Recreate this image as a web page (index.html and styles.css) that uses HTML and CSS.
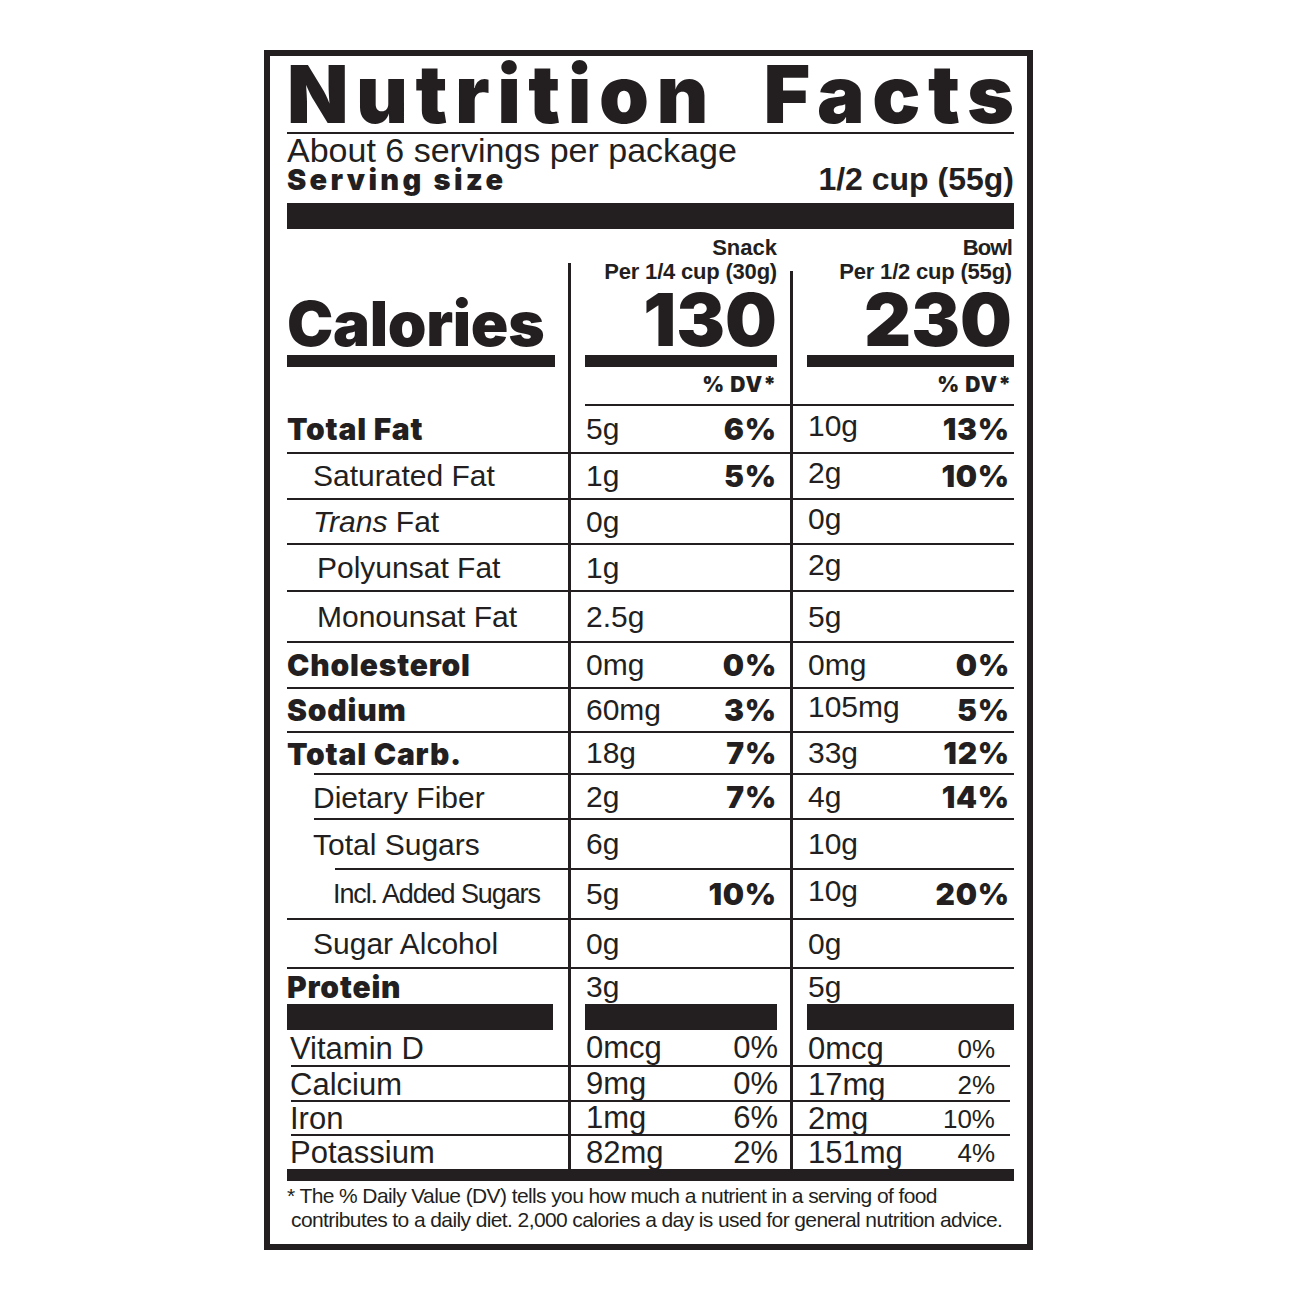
FILE: index.html
```html
<!DOCTYPE html>
<html lang="en">
<head>
<meta charset="utf-8">
<title>Nutrition Facts</title>
<link rel="stylesheet" href="styles.css">
</head>
<body>
<div class="label">
  <div class="title"><span>Nutrition</span><span class="last">Facts</span></div>
  <div class="servings">About 6 servings per package</div>
  <div class="size"><span class="size-k">Serving size</span><span class="size-v">1/2 cup (55g)</span></div>
  <div class="bar-thick"></div>

  <div class="facts">
    <div class="c-lab">
      <div class="cal-word">Calories</div>
      <div class="cal-bar lab-bar"></div>
    </div>
    <div class="hdr hdr-s">
      <div class="h-name">Snack</div>
      <div class="h-per">Per 1/4 cup (30g)</div>
      <div class="h-cal">130</div>
      <div class="cal-bar"></div>
      <div class="h-dv">% DV*</div>
    </div>
    <div class="hdr hdr-w">
      <div class="h-name h-bowl">Bowl</div>
      <div class="h-per">Per 1/2 cup (55g)</div>
      <div class="h-cal">230</div>
      <div class="cal-bar"></div>
      <div class="h-dv">% DV*</div>
    </div>

    <div class="cell lab bold">Total Fat</div>
    <div class="cell val s"><span>5g</span><b class="pct">6%</b></div>
    <div class="cell val w"><span class="up">10g</span><b class="pct">13%</b></div>

    <div class="cell lab i1">Saturated Fat</div>
    <div class="cell val s"><span>1g</span><b class="pct">5%</b></div>
    <div class="cell val w"><span class="up">2g</span><b class="pct">10%</b></div>

    <div class="cell lab i1"><span><i>Trans</i> Fat</span></div>
    <div class="cell val s"><span>0g</span></div>
    <div class="cell val w"><span class="up">0g</span></div>

    <div class="cell lab i2">Polyunsat Fat</div>
    <div class="cell val s"><span>1g</span></div>
    <div class="cell val w"><span class="up">2g</span></div>

    <div class="cell lab i2">Monounsat Fat</div>
    <div class="cell val s"><span>2.5g</span></div>
    <div class="cell val w"><span>5g</span></div>

    <div class="cell lab bold">Cholesterol</div>
    <div class="cell val s"><span>0mg</span><b class="pct">0%</b></div>
    <div class="cell val w"><span>0mg</span><b class="pct">0%</b></div>

    <div class="cell lab bold">Sodium</div>
    <div class="cell val s"><span>60mg</span><b class="pct">3%</b></div>
    <div class="cell val w"><span class="up">105mg</span><b class="pct">5%</b></div>

    <div class="cell lab bold ln27">Total Carb.</div>
    <div class="cell val s"><span>18g</span><b class="pct">7%</b></div>
    <div class="cell val w"><span>33g</span><b class="pct">12%</b></div>

    <div class="cell lab i1 ln27">Dietary Fiber</div>
    <div class="cell val s"><span>2g</span><b class="pct">7%</b></div>
    <div class="cell val w"><span>4g</span><b class="pct">14%</b></div>

    <div class="cell lab i1 ln48">Total Sugars</div>
    <div class="cell val s"><span>6g</span></div>
    <div class="cell val w"><span>10g</span></div>

    <div class="cell lab i3 narrow">Incl. Added Sugars</div>
    <div class="cell val s"><span>5g</span><b class="pct">10%</b></div>
    <div class="cell val w"><span class="up">10g</span><b class="pct">20%</b></div>

    <div class="cell lab i1">Sugar Alcohol</div>
    <div class="cell val s"><span>0g</span></div>
    <div class="cell val w"><span>0g</span></div>

    <div class="cell lab bold nob">Protein</div>
    <div class="cell val s nob"><span>3g</span></div>
    <div class="cell val w nob"><span>5g</span></div>

    <div class="cell lab nob"><div class="blk blk-l"></div></div>
    <div class="cell val nob"><div class="blk blk-s"></div></div>
    <div class="cell val nob"><div class="blk blk-w"></div></div>

    <div class="cell lab vit ln4">Vitamin D</div>
    <div class="cell val s vit"><span>0mcg</span><span>0%</span></div>
    <div class="cell val w vit vw"><span>0mcg</span><span class="vp">0%</span></div>

    <div class="cell lab vit ln4">Calcium</div>
    <div class="cell val s vit"><span>9mg</span><span>0%</span></div>
    <div class="cell val w vit vw"><span>17mg</span><span class="vp">2%</span></div>

    <div class="cell lab vit ln4">Iron</div>
    <div class="cell val s vit"><span>1mg</span><span>6%</span></div>
    <div class="cell val w vit vw"><span>2mg</span><span class="vp">10%</span></div>

    <div class="cell lab vit nob">Potassium</div>
    <div class="cell val s vit nob"><span>82mg</span><span>2%</span></div>
    <div class="cell val w vit nob"><span>151mg</span><span class="vp">4%</span></div>
  </div>

  <div class="bar-bottom"></div>
  <div class="foot">
    <div class="foot-1">* The % Daily Value (DV) tells you how much a nutrient in a serving of food</div>
    <div class="foot-2">contributes to a daily diet. 2,000 calories a day is used for general nutrition advice.</div>
  </div>
</div>
</body>
</html>
```
FILE: styles.css
```css
html, body {
  margin: 0;
  padding: 0;
  background: #ffffff;
}

body {
  color: #231f20;
  font-family: "Liberation Sans", Arial, sans-serif;
}

.label {
  box-sizing: border-box;
  width: 769px;
  margin: 50px 0 0 264px;
  border: 6px solid #231f20;
  padding: 0 13px 12px 17px;
  background: #ffffff;
}

.title {
  display: flex;
  justify-content: space-between;
  font-family: Inter, "DejaVu Sans", sans-serif;
  font-weight: 900;
  font-size: 80px;
  line-height: 76px;
  letter-spacing: 7.5px;
  border-bottom: 2px solid #231f20;
  white-space: nowrap;
}

.title .last {
  margin-right: -7.5px;
}

.servings {
  font-size: 34px;
  line-height: 32px;
  white-space: nowrap;
}

.size {
  display: flex;
  justify-content: space-between;
  align-items: baseline;
  line-height: 26px;
}

.size-k {
  font-family: Inter, "DejaVu Sans", sans-serif;
  font-weight: 900;
  font-size: 29px;
  letter-spacing: 3.3px;
}

.size-v {
  font-weight: 700;
  font-size: 32px;
}

.bar-thick {
  height: 26px;
  margin-top: 10px;
  background: #231f20;
}

/* ---------- main grid ---------- */
.facts {
  display: grid;
  grid-template-columns: 281px 222px 224px;
  grid-template-rows:
    177px
    48px 46px 45px 47px 51px 46px 44px 42px 45px 50px 50px 49px
    35px 26px
    37px 35px 34px 33px;
}

.c-lab {
  display: flex;
  flex-direction: column;
  padding-top: 64px;
}

.cal-word {
  font-family: Inter, "DejaVu Sans", sans-serif;
  font-weight: 900;
  font-size: 62px;
  line-height: 62px;
  letter-spacing: -0.3px;
}

.cal-bar {
  height: 12px;
  background: #231f20;
  align-self: stretch;
  margin-left: 17px;
}

.cal-bar.lab-bar {
  margin-left: 0;
  margin-right: 13px;
}

.hdr {
  display: flex;
  flex-direction: column;
  align-items: flex-end;
  box-sizing: border-box;
  padding: 8px 13px 8px 0;
}

.hdr-s {
  background:
    linear-gradient(#231f20, #231f20) 0 34px / 3px 100% no-repeat,
    linear-gradient(#231f20, #231f20) 17px 100% / calc(100% - 17px) 2px no-repeat;
}

.hdr-w {
  padding-right: 0;
  background:
    linear-gradient(#231f20, #231f20) 0 42px / 3px 100% no-repeat,
    linear-gradient(#231f20, #231f20) 0 100% / 100% 2px no-repeat;
}

.hdr-w .h-name,
.hdr-w .h-per,
.hdr-w .h-cal,
.hdr-w .h-dv {
  padding-right: 2px;
}

.h-name {
  font-weight: 700;
  font-size: 22px;
  line-height: 22px;
}

.h-bowl {
  letter-spacing: -0.8px;
}

.h-per {
  font-weight: 700;
  font-size: 22px;
  line-height: 26px;
  letter-spacing: -0.2px;
  white-space: nowrap;
}

.h-cal {
  font-family: Inter, "DejaVu Sans", sans-serif;
  font-weight: 900;
  font-size: 73px;
  line-height: 70px;
}

.h-dv {
  font-family: Inter, "DejaVu Sans", sans-serif;
  font-weight: 900;
  font-size: 21px;
  line-height: 26px;
  margin-top: 5px;
  letter-spacing: 1px;
}

/* ---------- rows ---------- */
.cell {
  display: flex;
  align-items: center;
  box-sizing: border-box;
  border-bottom: 2px solid #231f20;
  font-size: 30px;
  line-height: 34px;
  white-space: nowrap;
}

.lab.bold {
  font-family: Inter, "DejaVu Sans", sans-serif;
  font-weight: 900;
  font-size: 30px;
  letter-spacing: 0.8px;
}

.lab.i1 { padding-left: 26px; }
.lab.i2 { padding-left: 30px; }
.lab.i3 { padding-left: 46px; }

.lab.narrow {
  font-size: 27px;
  letter-spacing: -1.1px;
}

.ln27 {
  border-bottom: 0;
  background: linear-gradient(#231f20, #231f20) 27px 100% / calc(100% - 27px) 2px no-repeat;
}

.ln48 {
  border-bottom: 0;
  background: linear-gradient(#231f20, #231f20) 48px 100% / calc(100% - 48px) 2px no-repeat;
}

.ln4 {
  border-bottom: 0;
  background: linear-gradient(#231f20, #231f20) 4px 100% / calc(100% - 4px) 2px no-repeat;
}

.nob {
  border-bottom: 0;
}

.val {
  border-left: 3px solid #231f20;
  justify-content: space-between;
}

.val.s { padding: 0 13px 0 15px; }
.val.w { padding: 0 4px 0 15px; }

.pct {
  font-family: Inter, "DejaVu Sans", sans-serif;
  font-weight: 900;
  font-size: 30px;
  letter-spacing: 0.8px;
}

.up {
  margin-bottom: 6px;
}

/* black bars below protein */
.blk {
  height: 26px;
  background: #231f20;
  flex: 1;
}

.blk-l { margin-right: 15px; }
.blk-s { margin: 0 13px 0 14px; }
.blk-w { margin: 0 0 0 14px; }

/* vitamins */
.vit {
  font-size: 31px;
  line-height: 34px;
}

.lab.vit { padding-left: 3px; }

.val.s.vit { padding-right: 12px; }

.val.w.vit { padding-right: 19px; }

.vw {
  border-bottom: 0;
  background: linear-gradient(#231f20, #231f20) 0 100% / calc(100% - 4px) 2px no-repeat;
}

.vp {
  font-size: 26px;
}

/* ---------- footer ---------- */
.bar-bottom {
  height: 12px;
  background: #231f20;
}

.foot {
  margin-top: 3px;
  font-size: 21px;
  line-height: 24px;
  letter-spacing: -0.6px;
  white-space: nowrap;
}

.foot-2 {
  padding-left: 4px;
}
```
